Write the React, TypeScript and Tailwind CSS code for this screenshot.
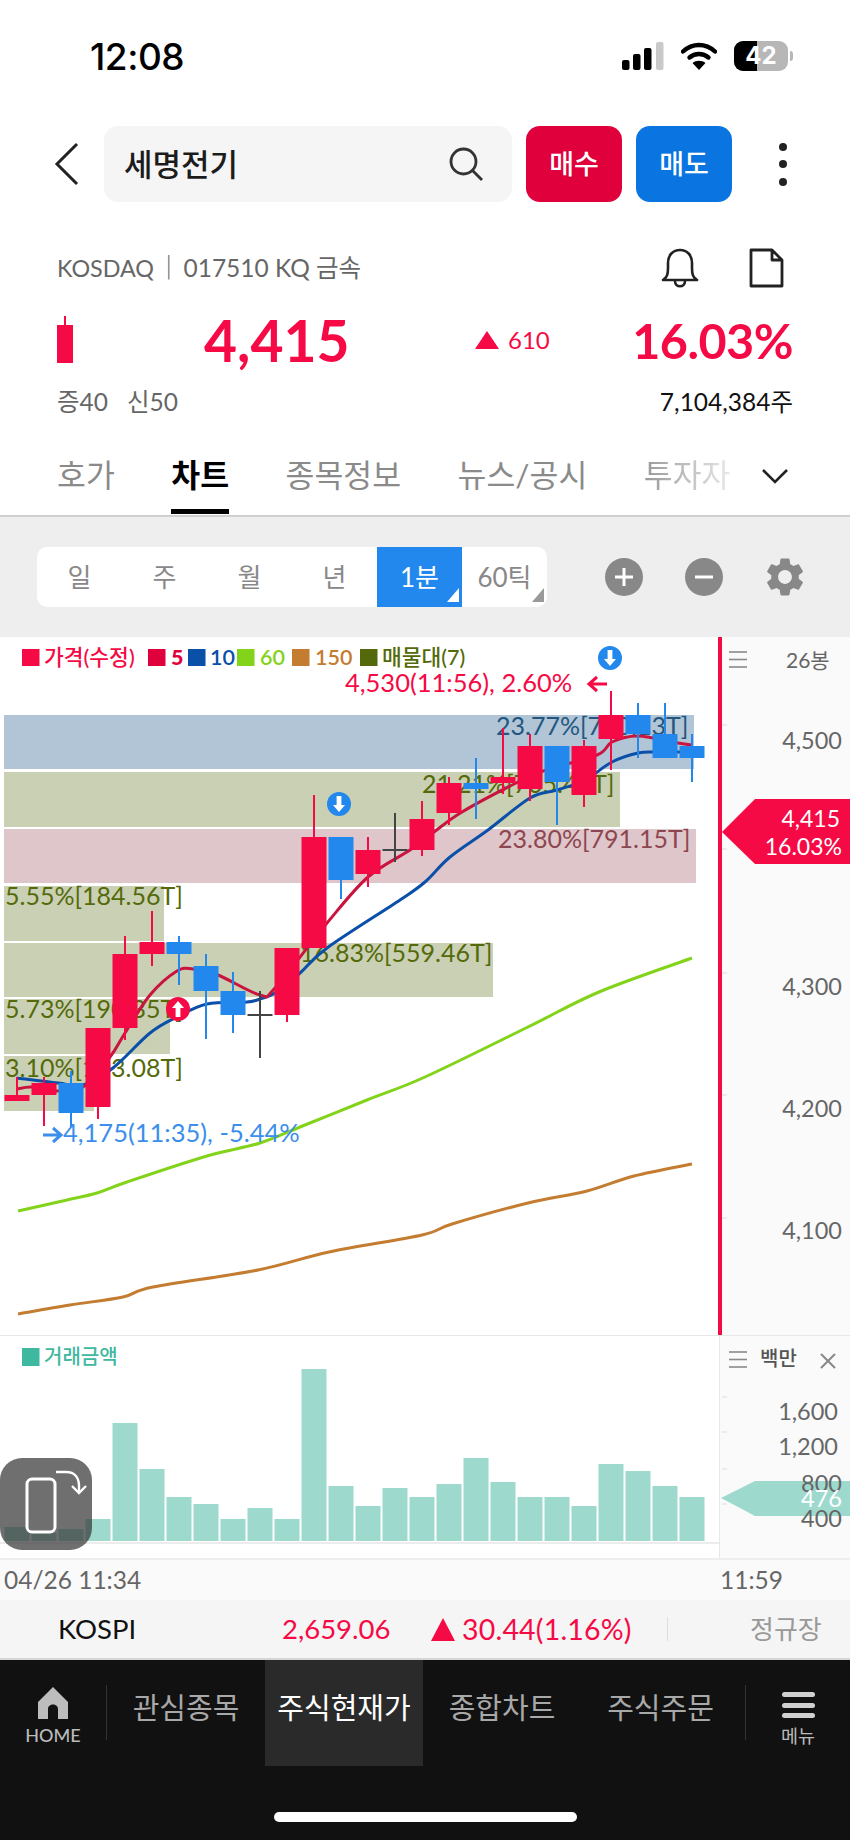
import React from "react";
import { MdSettings } from "react-icons/md";

const F = "[font-family:Lato,'Noto_Sans_CJK_KR',sans-serif]";
const RED = "#f50a45";
const BLUE = "#2388ee";

type C = [number, number, number, number, number, string];
// center x, wick top, wick bottom, body top, body bottom, kind
const candles: C[] = [
  [17, 1077, 1101, 1095, 1101, "r"],
  [44, 1077, 1126, 1083, 1095, "r"],
  [71, 1071, 1127, 1083, 1113, "b"],
  [98, 1028, 1119, 1028, 1107, "r"],
  [125, 936, 1040, 954, 1028, "r"],
  [152, 911, 966, 942, 954, "r"],
  [179, 936, 985, 942, 954, "b"],
  [206, 954, 1039, 966, 991, "b"],
  [233, 972, 1033, 991, 1015, "b"],
  [260, 991, 1058, 1014, 1016, "d"],
  [287, 948, 1022, 948, 1015, "r"],
  [314, 795, 948, 837, 948, "r"],
  [341, 837, 899, 837, 880, "b"],
  [368, 837, 887, 850, 874, "r"],
  [395, 813, 862, 849, 851, "d"],
  [422, 801, 856, 819, 850, "r"],
  [449, 777, 825, 783, 813, "r"],
  [476, 758, 819, 783, 789, "b"],
  [503, 728, 794, 777, 783, "r"],
  [530, 734, 801, 746, 789, "r"],
  [557, 746, 825, 746, 782, "b"],
  [584, 740, 807, 746, 795, "r"],
  [611, 691, 770, 715, 739, "r"],
  [638, 703, 758, 715, 734, "b"],
  [665, 703, 758, 734, 758, "b"],
  [692, 734, 782, 746, 758, "b"],
];

const bands: [number, number, number, number, string][] = [
  [4, 715, 690, 54, "#b1c5d7"],
  [4, 772, 616, 55, "#cad0b4"],
  [4, 829, 692, 54, "#dfc6ca"],
  [4, 886, 160, 55, "#cad0b4"],
  [4, 943, 489, 54, "#cad0b4"],
  [4, 999, 166, 55, "#cad0b4"],
  [4, 1056, 90, 55, "#cad0b4"],
];

type P = [number, number];
const ma5: P[] = [[17,1089],[32,1087],[58,1091],[83,1087],[110,1057],[125,1033],[150,995],[177,971],[193,969],[218,975],[260,995],[275,988],[327,923],[368,877],[410,850],[434,832],[462,812],[516,783],[543,771],[597,755],[612,742],[638,736],[678,743],[692,745]];
const ma10: P[] = [[17,1078],[58,1083],[83,1085],[113,1068],[150,1033],[177,1017],[207,1004],[247,1002],[260,999],[275,993],[300,973],[327,948],[400,900],[425,882],[450,857],[488,830],[530,798],[557,790],[585,780],[612,762],[638,753],[658,752],[692,752]];
const ma60: P[] = [[18,1211],[67,1200],[97,1193],[127,1182],[207,1156],[260,1143],[300,1127],[367,1100],[425,1077],[528,1027],[599,992],[692,958]];
const ma150: P[] = [[18,1314],[70,1305],[123,1297],[153,1287],[258,1270],[329,1252],[422,1235],[452,1224],[528,1203],[587,1191],[634,1176],[692,1164]];

function smooth(p: P[]) {
  let d = `M${p[0][0]} ${p[0][1]}`;
  for (let i = 0; i < p.length - 1; i++) {
    const a = p[Math.max(i - 1, 0)];
    const b = p[i];
    const c = p[i + 1];
    const e = p[Math.min(i + 2, p.length - 1)];
    const c1x = b[0] + (c[0] - a[0]) / 6;
    const c1y = b[1] + (c[1] - a[1]) / 6;
    const c2x = c[0] - (e[0] - b[0]) / 6;
    const c2y = c[1] - (e[1] - b[1]) / 6;
    d += ` C${c1x} ${c1y} ${c2x} ${c2y} ${c[0]} ${c[1]}`;
  }
  return d;
}

const bars = [1527, 1533, 1529, 1519, 1423, 1469, 1497, 1504, 1519, 1508, 1519, 1369, 1486, 1506, 1488, 1497, 1484, 1458, 1482, 1497, 1497, 1506, 1464, 1471, 1486, 1497];

const legend: [number, string, string, number, number][] = [
  [22, RED, "가격(수정)", 44, 500],
  [148, "#e0003c", "5", 171, 900],
  [188, "#0a4fa8", "10", 210, 600],
  [237, "#82d31a", "60", 260, 600],
  [292, "#c47c30", "150", 315, 600],
  [360, "#546a0a", "매물대(7)", 382, 500],
];

function Marker({ x, y, c, up }: { x: number; y: number; c: string; up?: boolean }) {
  return (
    <g transform={`translate(${x} ${y})`}>
      <circle r="12" fill={c} />
      <path d={up ? "M0 -8 L6 -1 L2.4 -1 L2.4 8 L-2.4 8 L-2.4 -1 L-6 -1 Z" : "M0 8 L6 1 L2.4 1 L2.4 -8 L-2.4 -8 L-2.4 1 L-6 1 Z"} fill="#fff" />
    </g>
  );
}

function Burger({ y }: { y: number }) {
  return (
    <g stroke="#8a8a8a" strokeWidth="1.6">
      <line x1="7" x2="25" y1={y} y2={y} />
      <line x1="7" x2="25" y1={y + 7.5} y2={y + 7.5} />
      <line x1="7" x2="25" y1={y + 15} y2={y + 15} />
    </g>
  );
}

function StatusBar() {
  return (
    <div className="flex h-[112px] items-center justify-between pl-[90px] pr-[57px]">
      <span className="[font-family:Inter,sans-serif] text-[37px] font-medium leading-none tracking-[-0.5px] text-black">12:08</span>
      <div className="flex items-center gap-[17px]">
        <svg width="42" height="28" viewBox="0 0 42 28">
          <rect x="0" y="18" width="7.5" height="10" rx="2" fill="#000" />
          <rect x="11" y="12" width="7.5" height="16" rx="2" fill="#000" />
          <rect x="22" y="6" width="7.5" height="22" rx="2" fill="#000" />
          <rect x="34" y="0" width="7.5" height="28" rx="2" fill="#c9c9c9" />
        </svg>
        <svg width="36" height="28" viewBox="0 0 36 28">
          <path d="M2 9.5 C11.5 0.8 24.5 0.8 34 9.5" fill="none" stroke="#000" strokeWidth="4.4" strokeLinecap="round" />
          <path d="M8.5 15.5 C14 10.8 22 10.8 27.5 15.5" fill="none" stroke="#000" strokeWidth="4.4" strokeLinecap="round" />
          <path d="M18 28 L11.5 21 C15 18 21 18 24.5 21 Z" fill="#000" />
        </svg>
        <div className="flex items-center gap-[2px]">
          <div className="relative flex h-[30px] w-[54px] items-center justify-center overflow-hidden rounded-[9px] bg-[#b7b7b7]">
            <div className="absolute inset-y-0 left-0 w-[23px] bg-black" />
            <span className="relative [font-family:Inter,sans-serif] text-[24px] font-bold leading-none text-white">42</span>
          </div>
          <div className="h-[10px] w-[3px] rounded-r-full bg-[#b7b7b7]" />
        </div>
      </div>
    </div>
  );
}

function Header() {
  return (
    <div className="flex h-[76px] items-center">
      <div className="flex w-[104px] justify-end pr-[24px]">
        <svg width="26" height="44" viewBox="0 0 26 44">
          <path d="M23 2 L3 22 L23 42" fill="none" stroke="#222" strokeWidth="3" />
        </svg>
      </div>
      <div className="flex h-[76px] w-[408px] items-center justify-between rounded-[14px] bg-[#f5f5f5] pl-[20px] pr-[28px]">
        <span className="text-[31px] font-medium leading-none text-[#1c1c1c]">세명전기</span>
        <svg width="36" height="36" viewBox="0 0 36 36">
          <circle cx="15.5" cy="15.5" r="12.5" fill="none" stroke="#333" strokeWidth="2.8" />
          <line x1="24.5" y1="24.5" x2="34" y2="34" stroke="#333" strokeWidth="2.8" />
        </svg>
      </div>
      <div className="ml-[14px] flex h-[76px] w-[96px] items-center justify-center rounded-[14px] bg-[#e0003c] text-[27px] font-medium text-white">매수</div>
      <div className="ml-[14px] flex h-[76px] w-[96px] items-center justify-center rounded-[14px] bg-[#0a74e0] text-[27px] font-medium text-white">매도</div>
      <div className="ml-[47px] flex flex-col gap-[9.5px]">
        <div className="h-[8px] w-[8px] rounded-full bg-[#222]" />
        <div className="h-[8px] w-[8px] rounded-full bg-[#222]" />
        <div className="h-[8px] w-[8px] rounded-full bg-[#222]" />
      </div>
    </div>
  );
}

function Summary() {
  return (
    <div className="px-[57px]">
      <div className="mt-[45px] flex h-[42px] items-center justify-between">
        <span className="text-[24.5px] leading-none text-[#666]">
          <span className="text-[23.3px]">KOSDAQ</span>
          <span className="px-[2.5px]">｜</span>
          017510 KQ 금속
        </span>
        <div className="flex items-center gap-[50px] pr-[9px]">
          <svg width="38" height="40" viewBox="0 0 38 40">
            <path d="M2 32 C6 29 7 27 7 20 L7 15 C7 7 12 2 19 2 C26 2 31 7 31 15 L31 20 C31 27 32 29 36 32 Z" fill="none" stroke="#222" strokeWidth="2.6" strokeLinejoin="round" />
            <path d="M14 33 C14 40 24 40 24 33" fill="none" stroke="#222" strokeWidth="2.6" />
          </svg>
          <svg width="35" height="40" viewBox="0 0 35 40">
            <path d="M2 2 L23 2 L33 12 L33 38 L2 38 Z M23 2 L23 12 L33 12" fill="none" stroke="#222" strokeWidth="2.8" strokeLinejoin="round" />
          </svg>
        </div>
      </div>
      <div className="mt-[23px] flex h-[56px] items-center">
        <svg width="16" height="48" viewBox="0 0 16 48" className="shrink-0">
          <rect x="7" y="0" width="2" height="10" fill={RED} />
          <rect x="0" y="9" width="16" height="38" fill={RED} />
        </svg>
        <span className="ml-[131px] w-[271px] text-[57px] font-bold leading-none text-[#f50a45]">4,415</span>
        <svg width="24" height="18" viewBox="0 0 24 18" className="shrink-0"><path d="M12 0 L24 18 L0 18 Z" fill={RED} /></svg>
        <span className="ml-[9px] text-[24px] leading-none text-[#f50a45]">610</span>
        <span className="ml-auto text-[48.5px] font-bold leading-none tracking-[-0.5px] text-[#f50a45]">16.03%</span>
      </div>
      <div className="mt-[16px] flex h-[36px] items-center justify-between text-[24.5px] leading-none">
        <span className="flex gap-[19px] text-[#666]">
          <span>증40</span>
          <span>신50</span>
        </span>
        <span className="text-[#111]">7,104,384주</span>
      </div>
    </div>
  );
}

function Tabs() {
  return (
    <div className="relative mt-[28px] flex h-[69px] items-center gap-[56.5px] border-b-2 border-[#cfcfcf] pb-[12px] pl-[57px] text-[31.4px] leading-none text-[#8a8a8a]">
      <span>호가</span>
      <span className="relative font-bold text-black">
        차트
        <span className="absolute -bottom-[23px] left-0 h-[5px] w-full bg-black" />
      </span>
      <span>종목정보</span>
      <span>뉴스/공시</span>
      <span className="bg-linear-to-r from-[#999] to-[#e8e8e8] bg-clip-text text-transparent">투자자</span>
      <svg width="28" height="16" viewBox="0 0 28 16" className="absolute right-[61px] top-[20px]">
        <path d="M2 2 L14 14 L26 2" fill="none" stroke="#222" strokeWidth="2.6" />
      </svg>
    </div>
  );
}

function Toolbar() {
  const cell = "relative flex h-[60px] w-[85px] items-center justify-center";
  return (
    <div className="flex h-[120px] items-center bg-[#eeeeee] pl-[37px]">
      <div className="flex h-[60px] w-[510px] overflow-hidden rounded-[10px] bg-white text-[26px] leading-none text-[#888]">
        <div className={cell}>일</div>
        <div className={cell}>주</div>
        <div className={cell}>월</div>
        <div className={cell}>년</div>
        <div className={`${cell} bg-[#2388ee] text-white`}>
          1분
          <svg width="12" height="14" viewBox="0 0 12 14" className="absolute bottom-[5px] right-[3px]"><path d="M12 0 L12 14 L0 14 Z" fill="#fff" /></svg>
        </div>
        <div className={cell}>
          60틱
          <svg width="12" height="14" viewBox="0 0 12 14" className="absolute bottom-[5px] right-[3px]"><path d="M12 0 L12 14 L0 14 Z" fill="#999" /></svg>
        </div>
      </div>
      <div className="ml-[58px] flex h-[38px] w-[38px] items-center justify-center rounded-full bg-[#888]">
        <svg width="20" height="20" viewBox="0 0 20 20"><path d="M10 1 V19 M1 10 H19" stroke="#fff" strokeWidth="3" /></svg>
      </div>
      <div className="ml-[42px] flex h-[38px] w-[38px] items-center justify-center rounded-full bg-[#888]">
        <svg width="20" height="20" viewBox="0 0 20 20"><path d="M1 10 H19" stroke="#fff" strokeWidth="3" /></svg>
      </div>
      <MdSettings className="ml-[39px] text-[#888]" size={46} />
    </div>
  );
}

function PriceChart() {
  const label = (t: string, x: number, y: number, c: string) => (
    <text x={x} y={y} fill={c} fontSize="25">{t}</text>
  );
  return (
    <svg width="718" height="698" viewBox="0 637 718 698" className="block shrink-0">
      {bands.map(([x, y, w, h, c], i) => (
        <rect key={i} x={x} y={y} width={w} height={h} fill={c} />
      ))}
      {label("23.77%[790.13T]", 496, 735, "#23577f")}
      {label("21.21%[705.48T]", 422, 793, "#546a0a")}
      {label("23.80%[791.15T]", 498, 848, "#8d4650")}
      {label("5.55%[184.56T]", 5, 905, "#546a0a")}
      {label("16.83%[559.46T]", 300, 962, "#546a0a")}
      {label("5.73%[190.35T]", 5, 1018, "#546a0a")}
      {label("3.10%[103.08T]", 5, 1077, "#546a0a")}

      <path d={smooth(ma150)} fill="none" stroke="#c47c30" strokeWidth="3" />
      <path d={smooth(ma60)} fill="none" stroke="#82d31a" strokeWidth="3" />
      <path d={smooth(ma10)} fill="none" stroke="#0a4fa8" strokeWidth="3" />
      <path d={smooth(ma5)} fill="none" stroke="#c8143f" strokeWidth="3" />

      {candles.map(([x, wt, wb, bt, bb, k], i) => {
        const c = k === "r" ? RED : k === "b" ? BLUE : "#444";
        return (
          <g key={i}>
            <rect x={x - 1} y={wt} width="2" height={wb - wt} fill={c} />
            <rect x={x - 12.5} y={bt} width="25" height={bb - bt} fill={c} />
          </g>
        );
      })}

      <Marker x={339} y={804} c={BLUE} />
      <Marker x={610} y={658} c={BLUE} />
      <Marker x={178} y={1009} c={RED} up />

      <text x="63" y="1142" fill="#3b8eea" fontSize="25.5">4,175(11:35), -5.44%</text>
      <path d="M43 1135 H60 M53 1128 L61 1135 L53 1142" fill="none" stroke="#3b8eea" strokeWidth="3" />
      <text x="345" y="692" fill={RED} fontSize="25.5">4,530(11:56), 2.60%</text>
      <path d="M607 684 H590 M597 677 L589 684 L597 691" fill="none" stroke={RED} strokeWidth="3" />

      {legend.map(([x, c, t, tx, w], i) => (
        <g key={i}>
          <rect x={x} y={649} width="17.5" height="17" fill={c} />
          <text x={tx} y={665} fill={c} fontSize="21.5" fontWeight={w}>{t}</text>
        </g>
      ))}
    </svg>
  );
}

function PriceAxis() {
  return (
    <svg width="128" height="698" viewBox="722 637 128 698" className="block shrink-0">
      <g transform="translate(722 0)"><Burger y={652} /></g>
      <text x="786" y="668" fill="#666" fontSize="21">26봉</text>
      {[725, 849, 973, 1095, 1218].map((y) => (
        <line key={y} x1="722" x2="727" y1={y} y2={y} stroke="#e6e6e6" strokeWidth="1.5" />
      ))}
      {[["4,500", 749], ["4,300", 995], ["4,200", 1117], ["4,100", 1239]].map(([t, y]) => (
        <text key={t} x="842" y={y} fill="#666" fontSize="23.5" textAnchor="end">{t}</text>
      ))}
      <polygon points="722,832 755,799 850,799 850,864 755,864" fill={RED} />
      <text x="840" y="827" fill="#fff" fontSize="23" textAnchor="end">4,415</text>
      <text x="842" y="855" fill="#fff" fontSize="23" textAnchor="end">16.03%</text>
    </svg>
  );
}

function VolumeChart() {
  return (
    <svg width="720" height="208" viewBox="0 1336 720 208" className="block shrink-0">
      <rect x="22" y="1348" width="17.5" height="18" fill="#3fb8a0" />
      <text x="44" y="1364" fill="#3fb8a0" fontSize="20" fontWeight="500">거래금액</text>
      {bars.map((t, i) => (
        <rect key={i} x={4.5 + i * 27} y={t} width="25" height={1541 - t} fill="#9ed9ce" />
      ))}
      <line x1="0" x2="720" y1="1543" y2="1543" stroke="#e6e6e6" strokeWidth="1.5" />
    </svg>
  );
}

function VolumeAxis() {
  return (
    <svg width="130" height="222" viewBox="720 1336 130 222" className="block shrink-0">
      <g transform="translate(722 0)"><Burger y={1352} /></g>
      <text x="760" y="1366" fill="#555" fontSize="20" fontWeight="500">백만</text>
      <path d="M821 1354 L835 1368 M835 1354 L821 1368" stroke="#888" strokeWidth="2" />
      {[1397, 1432, 1469, 1504].map((y) => (
        <line key={y} x1="722" x2="727" y1={y} y2={y} stroke="#e6e6e6" strokeWidth="1.5" />
      ))}
      <polygon points="721,1498 755,1481 850,1481 850,1516 755,1516" fill="#9ed9ce" />
      {[["1,600", 1420, 838], ["1,200", 1455, 838], ["800", 1492, 842], ["400", 1527, 842]].map(([t, y, x]) => (
        <text key={t} x={x} y={y} fill="#666" fontSize="23.5" textAnchor="end">{t}</text>
      ))}
      <text x="842" y="1507" fill="#fff" fontSize="23.5" textAnchor="end">476</text>
    </svg>
  );
}

function RotateButton() {
  return (
    <div className="absolute left-0 top-[122px] flex h-[92px] w-[92px] items-center justify-center rounded-[22px] bg-[rgba(55,55,55,0.72)]">
      <svg width="92" height="92" viewBox="0 0 92 92">
        <rect x="27" y="21" width="28" height="53" rx="5" fill="none" stroke="#fff" strokeWidth="3" />
        <path d="M56 14 H66 C75 14 79 20 79 28 V35" fill="none" stroke="#fff" strokeWidth="2.4" />
        <path d="M67 28 L74 35 L81 28" fill="none" stroke="#fff" strokeWidth="2.4" transform="translate(5 0)" />
      </svg>
    </div>
  );
}

function Kospi() {
  return (
    <div className="flex h-[60px] items-center border-b-2 border-[#d6d6d6] bg-[#f5f5f5] pl-[58px] text-[27.5px] leading-none">
      <span className="w-[224px] text-[#111]">KOSPI</span>
      <span className="w-[149px] text-[#f50a45]">2,659.06</span>
      <svg width="24" height="23" viewBox="0 0 24 23" className="shrink-0"><path d="M12 0 L24 23 L0 23 Z" fill={RED} /></svg>
      <span className="ml-[7px] w-[205px] text-[28.5px] tracking-[0.2px] text-[#f50a45]">30.44(1.16%)</span>
      <div className="h-[24px] w-px bg-[#dddddd]" />
      <span className="ml-[82px] text-[26px] text-[#999]">정규장</span>
    </div>
  );
}

function BottomNav() {
  const item = "flex h-full items-center justify-center pb-[12px] text-[29px] leading-none";
  return (
    <div className="relative h-[180px] bg-[#111111]">
      <div className="flex h-[106px]">
        <div className="flex w-[106px] flex-col items-center pt-[27px] text-[#bbb]">
          <svg width="32" height="32" viewBox="0 0 32 32">
            <path d="M16 0 L31 15 V32 H21 V22 C21 16 11 16 11 22 V32 H1 V15 Z" fill="#bdbdbd" />
          </svg>
          <span className="mt-[7px] text-[18px] font-medium leading-none">HOME</span>
        </div>
        <div className="mt-[25px] h-[55px] w-px bg-[#333]" />
        <div className={`${item} w-[158px] text-[#a8a8a8]`}>관심종목</div>
        <div className={`${item} w-[158px] bg-[#2a2a2a] text-white`}>주식현재가</div>
        <div className={`${item} w-[158px] text-[#a8a8a8]`}>종합차트</div>
        <div className={`${item} w-[164px] pr-[5px] text-[#a8a8a8]`}>주식주문</div>
        <div className="mt-[25px] h-[55px] w-px bg-[#333]" />
        <div className="flex flex-1 flex-col items-center pt-[32px] text-[#bbb]">
          <div className="flex flex-col gap-[5.5px]">
            <div className="h-[5px] w-[33px] rounded-full bg-[#d0d0d0]" />
            <div className="h-[5px] w-[33px] rounded-full bg-[#d0d0d0]" />
            <div className="h-[5px] w-[33px] rounded-full bg-[#d0d0d0]" />
          </div>
          <span className="mt-[9px] text-[18.5px] leading-none">메뉴</span>
        </div>
      </div>
      <div className="mx-auto mt-[46px] h-[10px] w-[303px] rounded-full bg-white" />
    </div>
  );
}

export default function App() {
  return (
    <div className={`${F} h-[1840px] w-[850px] overflow-hidden bg-white`}>
      <StatusBar />
      <div className="mt-[14px]">
        <Header />
      </div>
      <Summary />
      <Tabs />
      <Toolbar />
      <div className="flex h-[698px]">
        <div className="w-[722px] shrink-0 border-r-4 border-[#f50a45]">
          <PriceChart />
        </div>
        <div className="flex-1 bg-[#fafafa]">
          <PriceAxis />
        </div>
      </div>
      <div className="relative flex h-[223px] border-t border-[#e8e8e8]">
        <div className="w-[720px] shrink-0 border-r border-[#e8e8e8]">
          <VolumeChart />
        </div>
        <div className="flex-1 bg-[#fafafa]">
          <VolumeAxis />
        </div>
        <RotateButton />
      </div>
      <div className="flex h-[42px] items-center border-t-2 border-[#eeeeee] bg-[#fafafa] pl-[4px] text-[24.5px] leading-none text-[#666]">
        <span className="w-[716px]">04/26 11:34</span>
        <span>11:59</span>
      </div>
      <Kospi />
      <BottomNav />
    </div>
  );
}
